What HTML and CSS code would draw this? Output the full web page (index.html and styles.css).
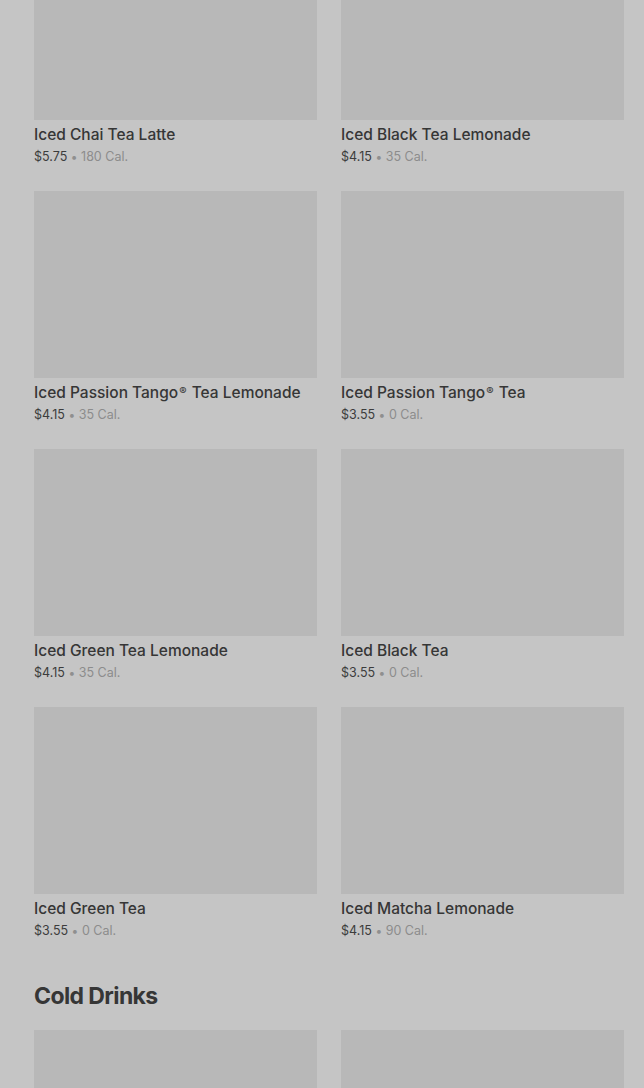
FILE: index.html
```html
<!DOCTYPE html>
<html lang="en">
<head>
    <meta charset="UTF-8">
    <meta name="viewport" content="width=device-width, initial-scale=1.0">
    <title>Menu - Iced Tea</title>
    <link rel="stylesheet" href="styles.css">
</head>
<body>
    <main class="menu">
        <section class="category">
            <div class="product-grid">
                <a class="product" href="#">
                    <div class="product-image"></div>
                    <div class="product-name">Iced Chai Tea Latte</div>
                    <div class="product-meta"><span class="price">$5.75</span> <span class="dot">•</span> <span class="cal">180 Cal.</span></div>
                </a>
                <a class="product" href="#">
                    <div class="product-image"></div>
                    <div class="product-name">Iced Black Tea Lemonade</div>
                    <div class="product-meta"><span class="price">$4.15</span> <span class="dot">•</span> <span class="cal">35 Cal.</span></div>
                </a>
                <a class="product" href="#">
                    <div class="product-image"></div>
                    <div class="product-name">Iced Passion Tango<span class="reg">®</span> Tea Lemonade</div>
                    <div class="product-meta"><span class="price">$4.15</span> <span class="dot">•</span> <span class="cal">35 Cal.</span></div>
                </a>
                <a class="product" href="#">
                    <div class="product-image"></div>
                    <div class="product-name">Iced Passion Tango<span class="reg">®</span> Tea</div>
                    <div class="product-meta"><span class="price">$3.55</span> <span class="dot">•</span> <span class="cal">0 Cal.</span></div>
                </a>
                <a class="product" href="#">
                    <div class="product-image"></div>
                    <div class="product-name">Iced Green Tea Lemonade</div>
                    <div class="product-meta"><span class="price">$4.15</span> <span class="dot">•</span> <span class="cal">35 Cal.</span></div>
                </a>
                <a class="product" href="#">
                    <div class="product-image"></div>
                    <div class="product-name">Iced Black Tea</div>
                    <div class="product-meta"><span class="price">$3.55</span> <span class="dot">•</span> <span class="cal">0 Cal.</span></div>
                </a>
                <a class="product" href="#">
                    <div class="product-image"></div>
                    <div class="product-name">Iced Green Tea</div>
                    <div class="product-meta"><span class="price">$3.55</span> <span class="dot">•</span> <span class="cal">0 Cal.</span></div>
                </a>
                <a class="product" href="#">
                    <div class="product-image"></div>
                    <div class="product-name">Iced Matcha Lemonade</div>
                    <div class="product-meta"><span class="price">$4.15</span> <span class="dot">•</span> <span class="cal">90 Cal.</span></div>
                </a>
            </div>
        </section>

        <section class="category">
            <h2 class="category-title">Cold Drinks</h2>
            <div class="product-grid">
                <a class="product" href="#">
                    <div class="product-image"></div>
                </a>
                <a class="product" href="#">
                    <div class="product-image"></div>
                </a>
            </div>
        </section>
    </main>
</body>
</html>
```

FILE: styles.css
```css
body {
    margin: 0;
    font-family: Inter, "Noto Sans", sans-serif;
    background-color: #c5c5c5;
    color: #353535;
    overflow: hidden;
}
.menu {
    padding: 0 20px 0 34px;
    margin-top: -67px;
}
.product-grid {
    display: grid;
    grid-template-columns: 1fr 1fr;
    column-gap: 24px;
    row-gap: 24px;
}
.product {
    display: block;
    text-decoration: none;
    color: inherit;
}
.product-image {
    height: 187px;
    background-color: #b8b8b8;
}
.product-name {
    font-size: 15.5px;
    font-weight: 500;
    line-height: 24px;
    margin-top: 3px;
    color: #363636;
}
.reg {
    font-size: 11px;
    line-height: 0;
    vertical-align: 3px;
    margin: 0 1px;
}
.product-meta {
    font-size: 12.5px;
    line-height: 20px;
}
.price {
    color: #3c3c3c;
}
.dot {
    color: #8f8f8f;
    font-size: 12px;
}
.cal {
    color: #8c8c8c;
}
.category-title {
    margin: 39px 0 18px;
    font-size: 23px;
    line-height: 32px;
    font-weight: 700;
    letter-spacing: -0.6px;
    color: #363636;
}
```
